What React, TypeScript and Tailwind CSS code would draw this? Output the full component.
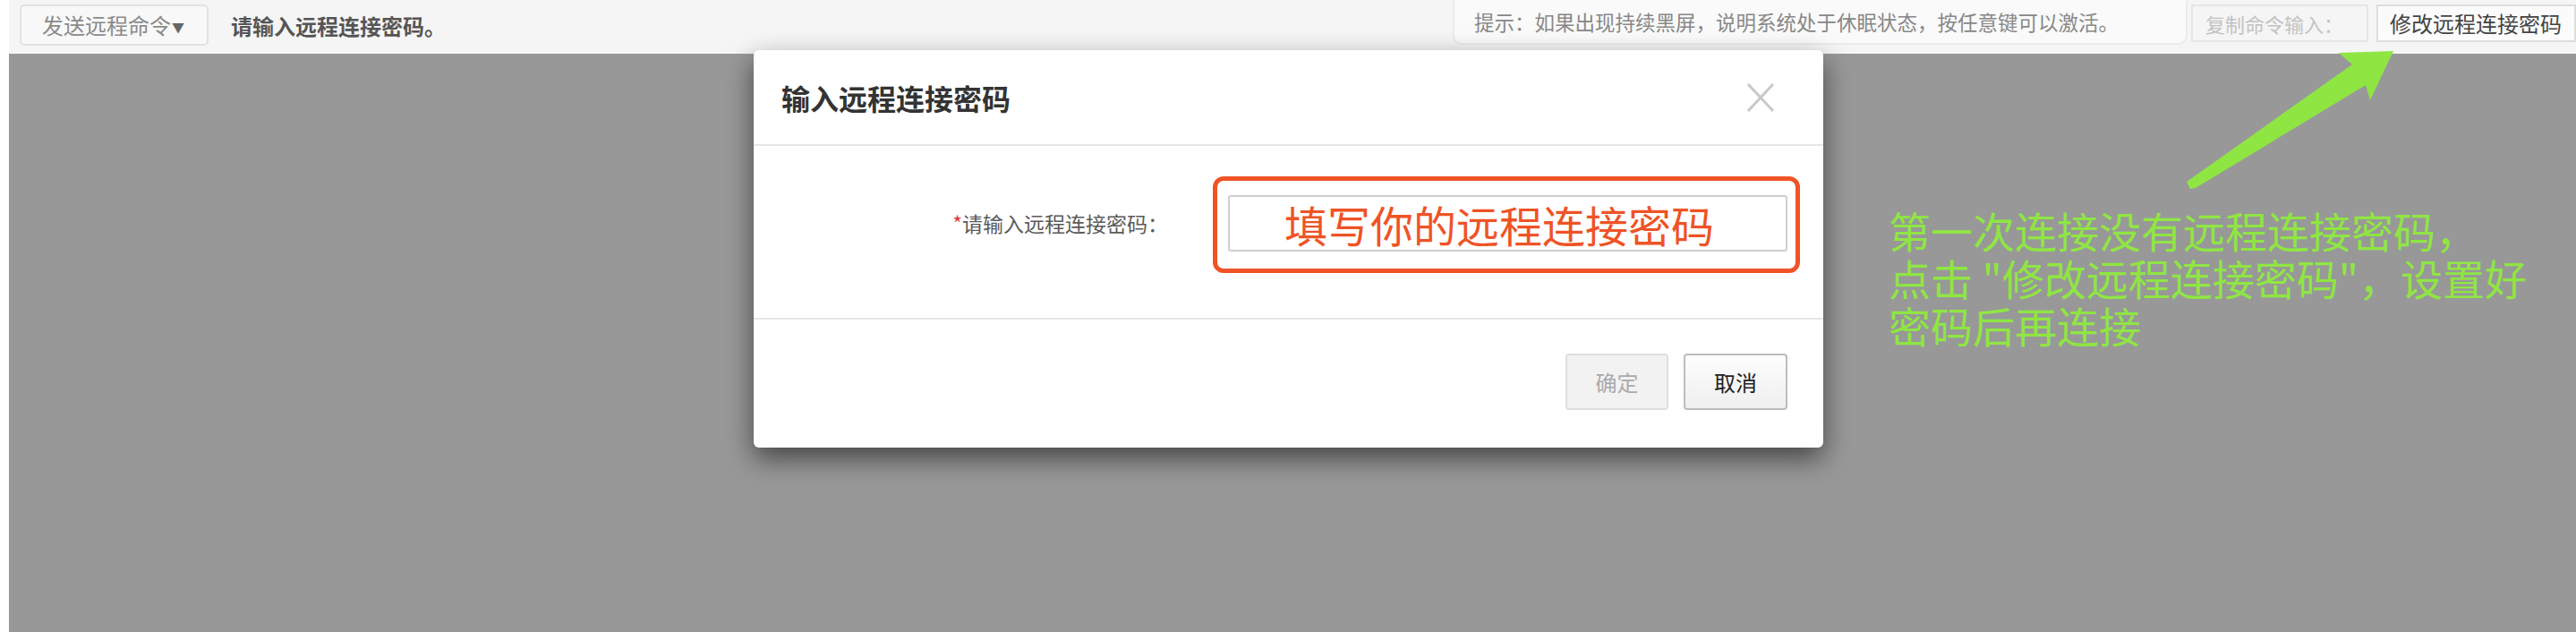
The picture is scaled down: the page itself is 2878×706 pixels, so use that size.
const cjk = "font-['Noto_Sans_CJK_SC','Liberation_Sans',sans-serif]";

function TopBar() {
  return (
    <div className="flex h-[60px] shrink-0 items-start bg-[#f5f5f5]">
      <button className="ml-[12px] mt-[5px] flex h-[46px] w-[211px] items-center rounded-[5px] border-2 border-[#e2e2e2] bg-[#f8f8f8] pl-[23px] text-[24px] leading-none text-[#8a8a8a]">
        发送远程命令
        <span className="ml-[1px] mt-[4px] text-[14px] text-[#666]">▼</span>
      </button>
      <span className="ml-[25px] mt-[15px] text-[24px] font-bold leading-[28px] text-[#555]">
        请输入远程连接密码。
      </span>

      <div className="ml-auto flex h-[50px] w-[821px] items-center rounded-b-[10px] border-2 border-t-0 border-[#ebebeb] bg-[#fafafa] pl-[22px] text-[22.5px] leading-none text-[#888]">
        提示：如果出现持续黑屏，说明系统处于休眠状态，按任意键可以激活。
      </div>
      <div className="ml-[4px] mt-[5px] flex h-[42px] w-[198px] items-center border-2 border-[#e6e6e6] bg-[#f5f5f5] pl-[14px] text-[22px] leading-none text-[#c2c2c2]">
        复制命令输入：
      </div>
      <button className="ml-[9px] mt-[5px] flex h-[42px] w-[223px] items-center border-2 border-[#dedede] bg-[#fbfbfb] pl-[13px] text-[24px] leading-none text-[#444]">
        修改远程连接密码
      </button>
    </div>
  );
}

function CloseIcon() {
  return (
    <svg width="32" height="34" viewBox="0 0 32 34" className="block">
      <line x1="2" y1="2" x2="30" y2="32" stroke="#c8c8c8" strokeWidth="3" />
      <line x1="30" y1="2" x2="2" y2="32" stroke="#c8c8c8" strokeWidth="3" />
    </svg>
  );
}

function PasswordDialog() {
  return (
    <div className="absolute left-[842px] top-[56px] flex h-[444px] w-[1195px] flex-col rounded-[6px] bg-white shadow-[0_12px_30px_rgba(0,0,0,0.55)]">
      <div className="flex h-[107px] shrink-0 items-center justify-between border-b-2 border-[#e6e6e6] pl-[31px] pr-[54px]">
        <span className="text-[32px] font-bold leading-none text-[#333]">输入远程连接密码</span>
        <CloseIcon />
      </div>

      <div className="flex h-[194px] shrink-0 items-start border-b-2 border-[#e6e6e6] pt-[34px]">
        <label className="mt-[38px] w-[463px] text-right text-[23px] leading-[28px] text-[#5a5a5a]">
          <span className="text-[#e4393c]">*</span>请输入远程连接密码：
        </label>
        <div className="ml-[50px] rounded-[12px] border-[5px] border-[#ef5326] pb-[19px] pl-[12px] pr-[9px] pt-[16px]">
          <div className="flex h-[63px] w-[625px] items-center rounded-[3px] border-2 border-[#cfcfcf] pl-[61px] text-[48px] leading-none text-[#ef5326]">
            填写你的远程连接密码
          </div>
        </div>
      </div>

      <div className="flex flex-1 items-start justify-end gap-[17px] pr-[40px] pt-[38px]">
        <button className="flex h-[63px] w-[115px] items-center justify-center rounded-[4px] border-2 border-[#dedede] bg-[#f2f2f2] text-[24px] leading-none text-[#aaa]">
          确定
        </button>
        <button className="flex h-[63px] w-[116px] items-center justify-center rounded-[4px] border-2 border-[#bdbdbd] bg-gradient-to-b from-[#fdfdfd] to-[#efefef] text-[24px] leading-none text-[#222]">
          取消
        </button>
      </div>
    </div>
  );
}

function Annotation() {
  return (
    <>
      <svg
        width="2878"
        height="706"
        viewBox="0 0 2878 706"
        className="pointer-events-none absolute left-0 top-0"
      >
        <polygon
          points="2443,203 2628,72 2613,59 2674,57 2648,112 2643,95 2453,210 2447,211"
          fill="#8fe643"
        />
      </svg>
      <p className="absolute left-[2110px] top-[230px] text-[47px] leading-[53px] text-[#8fe643]">
        第一次连接没有远程连接密码，
        <br />
        点击 "修改远程连接密码"，设置好
        <br />
        密码后再连接
      </p>
    </>
  );
}

export default function App() {
  return (
    <div className={`relative flex h-[706px] w-[2878px] flex-col overflow-hidden bg-white pl-[10px] ${cjk}`}>
      <TopBar />
      <div className="flex-1 bg-[#989898]" />
      <PasswordDialog />
      <Annotation />
    </div>
  );
}
